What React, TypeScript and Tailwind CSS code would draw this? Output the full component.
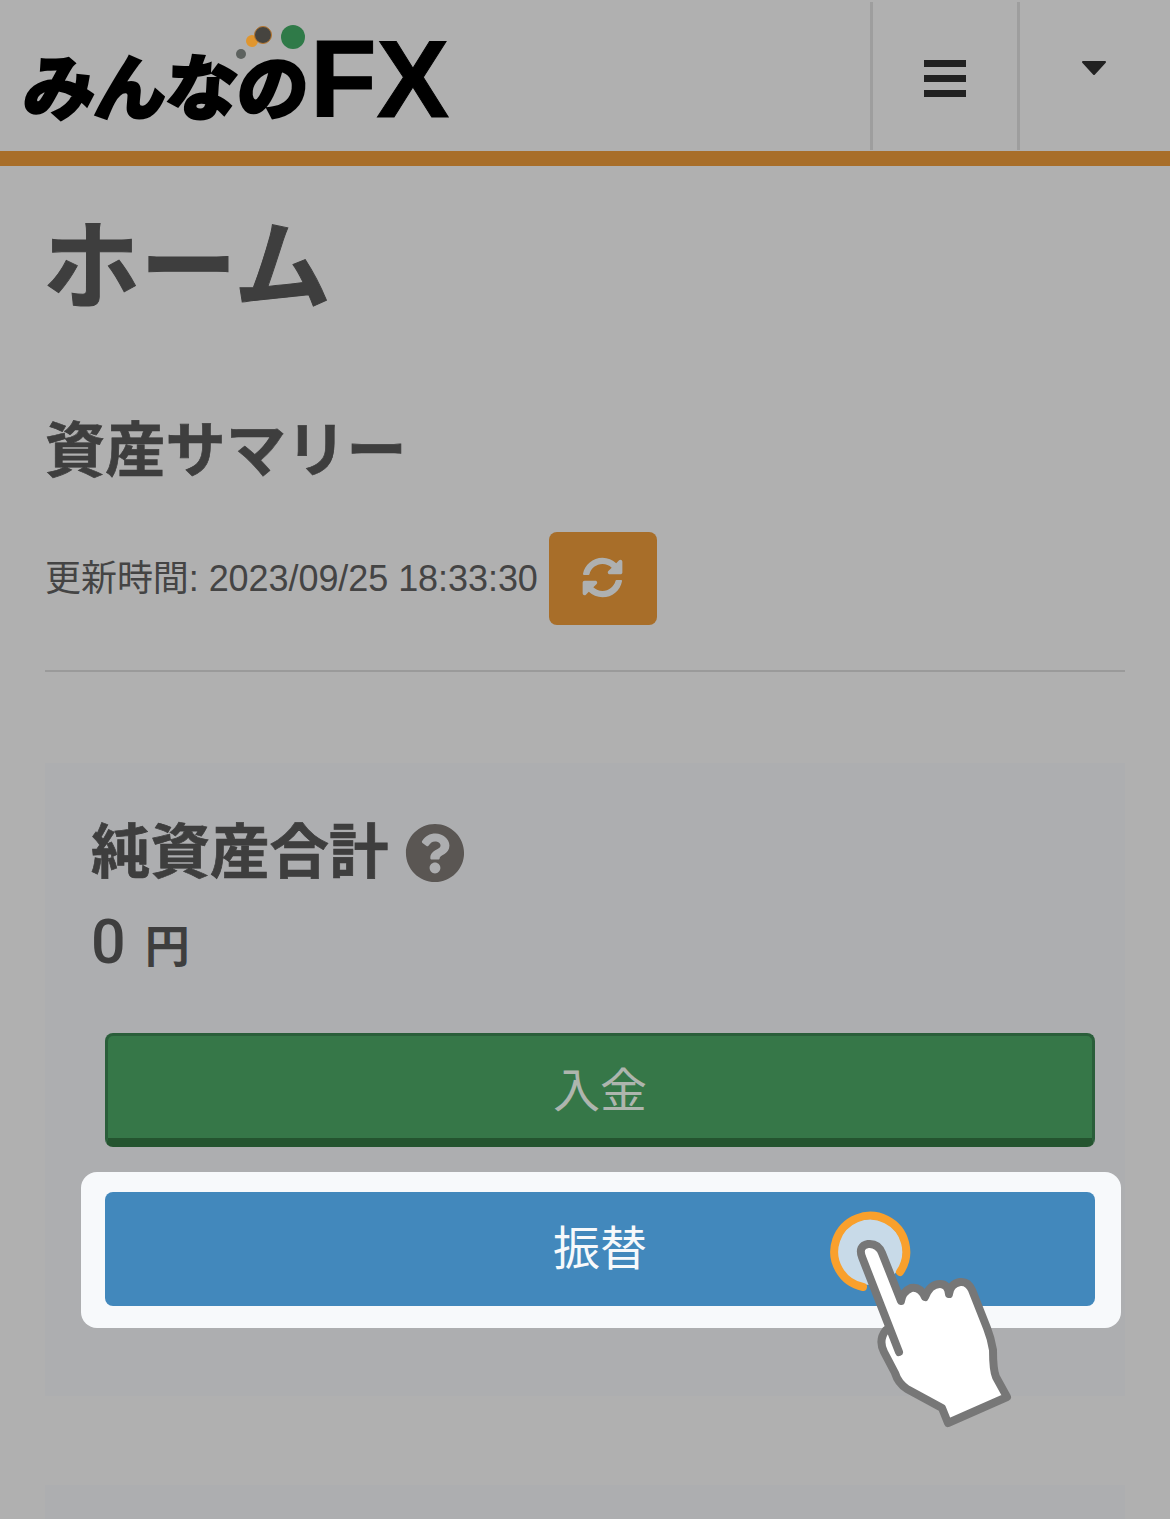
import { FaSyncAlt, FaQuestionCircle } from "react-icons/fa";

const font = "[font-family:'Liberation_Sans','Noto_Sans_CJK_JP',sans-serif]";

function Hand() {
  return (
    <svg className="absolute left-[780px] top-[1180px]" width="260" height="260" viewBox="0 0 260 260" fill="none">
      <circle cx="90" cy="72" r="33" fill="#c8dae8" />
      <path d="M120 92 A36 36 0 1 0 83 107" stroke="#f9a02c" strokeWidth="8" strokeLinecap="round" />
      <path
        d="M103 152 Q98 162 104 172 L115 193 Q118 203 127 209 L162 228 L168 243 L227 217 L216 197 Q213 190 213 170 Q211 158 207 148 L192 110 Q188 101 180 102 Q170 104 169 114 Q168 104 160 104 Q150 104 145 117 Q140 106 131 108 Q122 112 121 121 L102 73 Q98 63 88 64 Q78 66 82 77 L103 130 Z"
        fill="#fff"
      />
      <path
        d="M106 150 Q98 160 104 172 L115 193 Q118 203 127 209 L162 228 L168 243 L227 217 L216 197 Q213 190 213 170 Q211 158 207 148 L192 110 Q188 101 180 102 Q170 104 169 114 Q168 104 160 104 Q150 104 145 117 Q140 106 131 108 Q122 112 121 121 L102 73 Q98 63 88 64 Q78 66 82 77 L119 172"
        stroke="#777"
        strokeWidth="8"
        strokeLinecap="round"
        strokeLinejoin="round"
      />
    </svg>
  );
}

export default function App() {
  return (
    <div className={`relative h-[1519px] w-[1170px] overflow-hidden bg-[#b0b0b0] ${font}`}>
      <header className="flex h-[166px] border-b-[15px] border-[#a86e29]">
        <div className="relative flex-1">
          <div className="absolute left-[25px] top-[34px] flex items-end">
            <span className="-skew-x-6 text-[71px] leading-[90px] font-bold text-black [-webkit-text-stroke:4px_black] [font-family:'Noto_Sans_CJK_JP',sans-serif]">
              みんなの
            </span>
            <span className="mb-[4px] ml-[1px] text-[109px] leading-[90px] font-bold text-black [-webkit-text-stroke:1px_black]">FX</span>
          </div>
          <svg className="absolute left-[230px] top-[20px]" width="80" height="50" viewBox="0 0 80 50">
            <circle cx="22" cy="21" r="6" fill="#e0962f" />
            <circle cx="33" cy="15" r="8.5" fill="#46443f" stroke="#b9782f" strokeWidth="1" />
            <circle cx="63" cy="17" r="12" fill="#2f7a48" />
            <circle cx="11" cy="34" r="5" fill="#5d625f" />
          </svg>
        </div>
        <div className="mt-[2px] mb-[1px] flex w-[147px] items-center justify-center border-l-[3px] border-[#9e9e9e] pt-[4px]">
          <div className="flex w-[42px] flex-col gap-[8px]">
            <div className="h-[7px] bg-[#222]" />
            <div className="h-[7px] bg-[#222]" />
            <div className="h-[7px] bg-[#222]" />
          </div>
        </div>
        <div className="mt-[2px] mb-[1px] flex w-[153px] justify-center border-l-[3px] border-[#9e9e9e] pt-[59px] pr-[2px]">
          <svg width="26" height="15" viewBox="0 0 26 15">
            <path d="M2 1 H24 L13 13 Z" fill="#222" stroke="#222" strokeWidth="2" strokeLinejoin="round" />
          </svg>
        </div>
      </header>

      <main className="px-[45px]">
        <h1 className="mt-[41px] ml-[-2px] text-[97px] leading-[122px] font-bold text-[#3e3e3e] [-webkit-text-stroke:1px_#3e3e3e]">ホーム</h1>
        <h2 className="mt-[85px] text-[60px] leading-[76px] font-bold tracking-[0.3px] text-[#3e3e3e] [-webkit-text-stroke:0.7px_#3e3e3e]">資産サマリー</h2>
        <div className="mt-[42px] flex items-center">
          <span className="text-[36px] leading-[50px] tracking-[-0.06px] text-[#444]">更新時間: 2023/09/25 18:33:30</span>
          <button className="ml-[11px] flex h-[93px] w-[108px] items-center justify-center rounded-[8px] bg-[#a86e29] pb-[3px]">
            <FaSyncAlt className="text-[#aeb0b0]" size={41} />
          </button>
        </div>
        <hr className="mt-[45px] border-t-[2px] border-[#9a9a9a]" />

        <section className="mt-[91px] h-[633px] bg-[#adaeb0] px-[47px] pt-[51px]">
          <div className="flex items-center">
            <h3 className="ml-[-1px] text-[59.5px] leading-[78px] font-bold text-[#3e3e3e] [-webkit-text-stroke:0.7px_#3e3e3e]">純資産合計</h3>
            <FaQuestionCircle className="ml-[16px] text-[#5a5653]" size={60} />
          </div>
          <div className="mt-[12px] flex items-baseline text-[#3e3e3e]">
            <span className="ml-[-1px] text-[61px] leading-[76px] font-medium [font-family:Roboto,sans-serif]">0</span>
            <span className="ml-[19px] text-[45px] leading-[60px] font-bold">円</span>
          </div>
          <div className="mt-[53px] ml-[13px] w-[990px]">
            <button className="flex h-[114px] w-full items-center justify-center rounded-[8px] border-[3px] border-b-[9px] border-[#2a5e3a] border-b-[#24542f] bg-[#367748] pt-[8px] text-[47px] text-[#aeb5ae]">
              入金
            </button>
            <div className="relative mt-[25px] -mx-[24px] w-[1040px] rounded-[16px] bg-[#f7f9fb] px-[24px] pt-[20px] pb-[22px]">
              <button className="flex h-[114px] w-[990px] items-center justify-center rounded-[8px] bg-[#4288bc] text-[47px] text-[#f7f9fb]">
                振替
              </button>
            </div>
          </div>
        </section>

        <section className="mt-[89px] h-[100px] bg-[#adaeb0]" />
      </main>

      <Hand />
    </div>
  );
}
